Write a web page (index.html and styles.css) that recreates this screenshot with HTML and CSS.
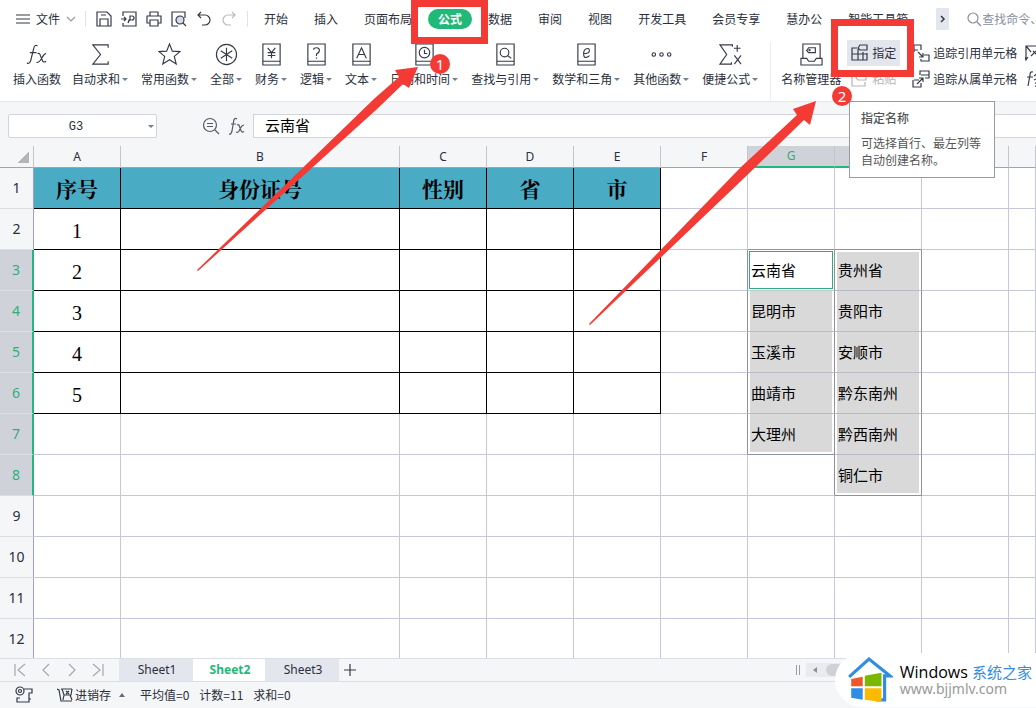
FILE: index.html
```html
<!DOCTYPE html>
<html lang="zh-CN">
<head>
<meta charset="utf-8">
<title>Sheet2</title>
<link rel="stylesheet" href="styles.css">
</head>
<body>
<div class="app">
  <nav class="menu">
    <button class="file"><svg class="burger" viewBox="0 0 14 10"><path d="M0 1h14M0 5h14M0 9h14"/></svg>文件<svg class="chev" viewBox="0 0 10 6"><path d="M1 1l4 4 4-4"/></svg></button>
    <div class="quick">
      <button aria-label="保存"><svg viewBox="0 0 16 16"><path d="M1 1h10l4 4v10H1zM4 15V8h8v7M5 4h5"/></svg></button>
      <button aria-label="输出"><svg viewBox="0 0 16 16"><path d="M2 5V1h13v14H2v-3M0 8h5M3 6l2 2-2 2M7 12l2-4V5h2a2 2 0 0 1 0 4H8l-1 3"/></svg></button>
      <button aria-label="打印"><svg viewBox="0 0 16 16"><path d="M4 5V1h8v4M4 12H1V5h14v7h-3M4 9h8v6H4z"/></svg></button>
      <button aria-label="预览"><svg viewBox="0 0 16 16"><path d="M7 15H1V1h13v6"/><circle cx="9" cy="9" r="4" fill="#d6dae6"/><path d="M12 12l3 3"/></svg></button>
      <button aria-label="撤销"><svg viewBox="0 0 16 16"><path d="M5 1L2 4l3 3M2 4h7a5 5 0 0 1 0 10H6"/></svg></button>
      <button aria-label="恢复" class="dim"><svg viewBox="0 0 16 16"><path d="M11 1l3 3-3 3M14 4H7a5 5 0 0 0 0 10h3"/></svg></button>
    </div>
    <div class="tabs">
      <button>开始</button><button>插入</button><button>页面布局</button><button class="on">公式</button><button>数据</button><button>审阅</button><button>视图</button><button>开发工具</button><button>会员专享</button><button>慧办公</button><button>智能工具箱</button>
    </div>
    <button class="more" aria-label="更多"><svg viewBox="0 0 6 10"><path d="M1 2l3 3-3 3"/></svg></button>
    <button class="find"><svg viewBox="0 0 16 16"><circle cx="7" cy="7" r="5"/><path d="M11 11l4 4"/></svg>查找命令、</button>
  </nav>

  <div class="ribbon">
    <div class="group">
      <button class="tool plain"><svg viewBox="0 0 24 24"><path d="M12 3q-3-2-4 3L5 18q-1 4-4 3M4 10h7M12 11q2-1 3 2l2 5q1 3 4 1M21 11q-2 0-4 4l-2 3q-2 3-4 2"/></svg><span>插入函数</span></button>
      <button class="tool"><svg viewBox="0 0 24 24"><path d="M20 5V2H4l8 10-8 10h16v-3"/></svg><span class="drop">自动求和</span></button>
      <button class="tool"><svg viewBox="0 0 24 24"><path d="M12 1l3 7.500 8 .5-6 5 2 8-7-4.500-7 4.500 2-8-6-5 8-.5z"/></svg><span class="drop">常用函数</span></button>
      <button class="tool"><svg viewBox="0 0 24 24"><circle cx="12" cy="12" r="10.500"/><path d="M12 5v14M6 8l12 8M18 8L6 16"/></svg><span class="drop">全部</span></button>
      <button class="tool"><svg viewBox="0 0 24 24"><path d="M3 1h18v22H3zM3 19h18M8 5l4 5 4-5M12 10v6M8 10h8M8 13h8"/></svg><span class="drop">财务</span></button>
      <button class="tool"><svg viewBox="0 0 24 24"><path d="M3 1h18v22H3zM3 19h18M9 7q0-2 3-2t3 2.500-3 4v2M12 15v1.500"/></svg><span class="drop">逻辑</span></button>
      <button class="tool"><svg viewBox="0 0 24 24"><path d="M3 1h18v22H3zM3 19h18M7 16l5-11 5 11M9 12h6"/></svg><span class="drop">文本</span></button>
      <button class="tool"><svg viewBox="0 0 24 24"><path d="M3 1h18v22H3zM3 19h18M12 7v4h3"/><circle cx="12" cy="10" r="5.500"/></svg><span class="drop">日期和时间</span></button>
      <button class="tool"><svg viewBox="0 0 24 24"><path d="M3 1h18v22H3zM3 19h18M14 13l4 3"/><circle cx="11" cy="10" r="4.500"/></svg><span class="drop">查找与引用</span></button>
      <button class="tool"><svg viewBox="0 0 24 24"><path d="M3 1h18v22H3zM3 19h18M9 11q6 0 6-3t-3-2-3 5q0 5 3 4t3-2"/></svg><span class="drop">数学和三角</span></button>
      <button class="tool"><svg viewBox="0 0 24 24"><circle cx="4" cy="12" r="1.800"/><circle cx="12" cy="12" r="1.800"/><circle cx="20" cy="12" r="1.800"/></svg><span class="drop">其他函数</span></button>
      <button class="tool"><svg viewBox="0 0 24 24"><path d="M14 4V2H1l7 10-7 10h12v-2M19 2v7M15.500 5.500h7M16 13l7 9M23 13l-7 9"/></svg><span class="drop">便捷公式</span></button>
    </div>
    <div class="group names">
      <button class="tool plain"><svg viewBox="0 0 24 24"><path d="M3 16V1h18v15M1 16h6l2 3h6l2-3h6v7H1zM7 8l2-3h7v5H9z"/><circle cx="10" cy="7.500" r=".6"/></svg><span>名称管理器</span></button>
      <div class="pair">
        <button class="hover"><svg viewBox="0 0 18 18"><path d="M7 4H2v12h15V9M2 10h15M8 5v11M13 8v8M8 4l2-3h7v5h-7z"/></svg>指定</button>
        <button class="off" disabled><svg viewBox="0 0 18 18"><path d="M6 3H2v13h13v-4M6 8l2-4h8v6H8z"/></svg>粘贴</button>
      </div>
    </div>
    <div class="group trace">
      <button><svg viewBox="0 0 18 18"><path d="M2 8V1h7v5M2 6h4M6 8l5 5M11 9v4H7M12 11h5v6H9v-2"/></svg>追踪引用单元格</button>
      <button><svg viewBox="0 0 18 18"><path d="M8 5V1h9v7h-4M9 5h8M5 14l6-6M7 8h4v4M2 10h5M1 10v7h8v-4"/></svg>追踪从属单元格</button>
    </div>
    <div class="group trace">
      <button aria-label="移去箭头"><svg viewBox="0 0 18 18"><path d="M1 15V2h13M1 2l5 6M6 12l8-8M8 7l7 7M3 13l-2 3-1-3"/></svg></button>
      <button aria-label="显示公式"><svg viewBox="0 0 18 18"><path d="M8 2Q5 1 5 5L3 16M2 7h6M9 6l5-4M9 10q4-2 4 1t-3 2q4 0 4 2t-4 1"/></svg></button>
    </div>
  </div>

  <div class="formula">
    <div class="namebox"><input type="text" aria-label="名称框" value="G3"><button aria-label="名称列表"></button></div>
    <div class="fx">
      <svg viewBox="0 0 18 18"><circle cx="8" cy="8" r="6.500"/><path d="M5 6.500h6M5 9.500h6M13 13l4 4"/></svg>
      <svg viewBox="0 0 18 18"><path d="M9 2Q6 0 5.500 5L4 14q-1 4-3 3M3 7h5M9 8q2-1 2.500 1.500l1.500 4q1 2.500 3 1M16 8q-2 0-3.500 3L11 14q-1 2-3 1"/></svg>
    </div>
    <input class="content" type="text" aria-label="编辑栏" value="云南省">
  </div>

  <div class="grid">
    <table>
      <colgroup><col class="c-row"><col class="c-std"><col class="c-wide"><col class="c-std"><col class="c-std"><col class="c-std"><col class="c-std"><col class="c-std"><col class="c-std"><col class="c-std"><col></colgroup>
      <thead><tr><th class="corner"></th><th>A</th><th>B</th><th>C</th><th>D</th><th>E</th><th>F</th><th class="pick">G</th><th class="pick"></th><th></th><th></th></tr></thead>
      <tbody>
        <tr class="title"><th>1</th><td class="t">序号</td><td class="t">身份证号</td><td class="t">性别</td><td class="t">省</td><td class="t">市</td><td></td><td></td><td></td><td></td><td></td></tr>
        <tr><th>2</th><td class="t">1</td><td class="t"></td><td class="t"></td><td class="t"></td><td class="t"></td><td></td><td class="above"></td><td class="above"></td><td></td><td></td></tr>
        <tr><th class="pick">3</th><td class="t">2</td><td class="t"></td><td class="t"></td><td class="t"></td><td class="t"></td><td class="edge"></td><td class="active"><span>云南省</span></td><td class="sel first">贵州省</td><td></td><td></td></tr>
        <tr><th class="pick">4</th><td class="t">3</td><td class="t"></td><td class="t"></td><td class="t"></td><td class="t"></td><td class="edge"></td><td class="sel">昆明市</td><td class="sel">贵阳市</td><td></td><td></td></tr>
        <tr><th class="pick">5</th><td class="t">4</td><td class="t"></td><td class="t"></td><td class="t"></td><td class="t"></td><td class="edge"></td><td class="sel">玉溪市</td><td class="sel">安顺市</td><td></td><td></td></tr>
        <tr><th class="pick">6</th><td class="t">5</td><td class="t"></td><td class="t"></td><td class="t"></td><td class="t"></td><td class="edge"></td><td class="sel">曲靖市</td><td class="sel">黔东南州</td><td></td><td></td></tr>
        <tr><th class="pick">7</th><td></td><td></td><td></td><td></td><td></td><td class="edge"></td><td class="sel last">大理州</td><td class="sel">黔西南州</td><td></td><td></td></tr>
        <tr><th class="pick">8</th><td></td><td></td><td></td><td></td><td></td><td></td><td class="edge"></td><td class="sel last">铜仁市</td><td></td><td></td></tr>
        <tr><th>9</th><td></td><td></td><td></td><td></td><td></td><td></td><td></td><td></td><td></td><td></td></tr>
        <tr><th>10</th><td></td><td></td><td></td><td></td><td></td><td></td><td></td><td></td><td></td><td></td></tr>
        <tr><th>11</th><td></td><td></td><td></td><td></td><td></td><td></td><td></td><td></td><td></td><td></td></tr>
        <tr><th>12</th><td></td><td></td><td></td><td></td><td></td><td></td><td></td><td></td><td></td><td></td></tr>
      </tbody>
    </table>
  </div>

  <div class="sheets">
    <div class="steps">
      <button aria-label="首个"><svg viewBox="0 0 12 14"><path d="M1 1v12M11 1L4 7l7 6"/></svg></button>
      <button aria-label="上一个"><svg viewBox="0 0 12 14"><path d="M9 1L3 7l6 6"/></svg></button>
      <button aria-label="下一个"><svg viewBox="0 0 12 14"><path d="M3 1l6 6-6 6"/></svg></button>
      <button aria-label="末个"><svg viewBox="0 0 12 14"><path d="M1 1l7 6-7 6M11 1v12"/></svg></button>
    </div>
    <button class="sheet">Sheet1</button><button class="sheet on">Sheet2</button><button class="sheet">Sheet3</button>
    <button class="add" aria-label="新建工作表"><svg viewBox="0 0 14 14"><path d="M7 1v12M1 7h12"/></svg></button>
    <div class="scroll"><i class="grip"></i><div class="track"><i class="left"></i><i class="thumb"></i></div></div>
  </div>

  <div class="status">
    <svg class="rec" viewBox="0 0 18 18"><circle cx="5" cy="5" r="4"/><circle cx="5" cy="5" r="1.500"/><path d="M9 3h8v4h-3v9H2v-4h3M14 13h2"/></svg>
    <button class="inv"><svg viewBox="0 0 16 16"><path d="M0 2l2 1 2 11h11M4 2h11M5 2l2 6h7l1-6M7 8l-1 5M13 8l2 5M9 4l3 3M12 4L9 7"/></svg>进销存<i class="up"></i></button>
    <span>平均值=0</span><span>计数=11</span><span>求和=0</span>
  </div>

  <div class="tip" role="tooltip"><strong>指定名称</strong><p>可选择首行、最左列等自动创建名称。</p></div>

  <div class="brand">
    <svg viewBox="0 0 44 46"><path d="M2 20L21 3l20 16h-5v23h-8" fill="none" stroke="#2f8de4" stroke-width="3"/><path d="M4 22l11-2v9H4z" fill="#f0562a"/><path d="M17 19l16-3v13H17z" fill="#7ab800"/><path d="M4 31h11v11L4 40z" fill="#2f8de4"/><path d="M17 31h16v13l-16-2z" fill="#fbb900"/></svg>
    <div><p class="name">Windows <b>系统之家</b></p><p class="site">www.bjjmlv.com</p></div>
  </div>

  <div class="marks">
    <svg viewBox="0 0 1036 708"><path d="M414.500 3.500h70v37h-70zM834.500 22.500h76v51h-76z" fill="none" stroke="#f33a35" stroke-width="7"/><path d="M197 270L375 98l24-21-4-7 23-3-9 21-6-4-27 26L198 271zM589 324L741 167l56-52-4-6 23-8-6 24-6-5-63 61L590 325z" fill="#f33a35"/></svg>
    <b class="dot one">1</b><b class="dot two">2</b>
  </div>
</div>
</body>
</html>
```
FILE: styles.css
```css
* { box-sizing: border-box; }
body { margin: 0; background: #fff; color: #2b2f3b; font: 12px/16px "Noto Sans CJK SC", sans-serif; }
button, input { font: inherit; color: inherit; border: 0; padding: 0; background: none; white-space: nowrap; }
p { margin: 0; }
svg { display: block; flex: none; fill: none; stroke: #353a49; stroke-width: 1.2; }
.app { position: relative; display: flex; flex-direction: column; height: 100vh; overflow: hidden; }

.menu { display: flex; align-items: center; flex: none; height: 38px; padding-left: 16px; overflow: hidden; }
.file { display: flex; align-items: center; gap: 6px; padding-right: 9px; border-right: 1px solid #e2e3e8; }
.burger { width: 14px; height: 10px; }
.chev { width: 10px; height: 6px; stroke: #999; }
.quick { display: flex; gap: 9px; padding: 0 10px; border-right: 1px solid #e2e3e8; }
.quick svg { width: 16px; height: 16px; }
.quick .dim svg { stroke: #bbb; }
.tabs { display: flex; flex: none; gap: 26px; margin-left: 16px; }
.tabs .on { margin: -2px -10px; padding: 2px 10px; border-radius: 10px; background: #21b978; color: #fff; font-weight: bold; }
.more { display: flex; align-items: center; justify-content: center; flex: none; width: 13px; height: 22px; margin-left: 28px; background: #e4e6ed; }
.more svg { width: 6px; height: 10px; stroke-width: 1.5; }
.find { display: flex; align-items: center; flex: none; margin-left: 17px; color: #8a8f9c; }
.find svg { width: 16px; height: 16px; stroke: #8a8f9c; }

.ribbon { display: flex; flex: none; height: 64px; padding: 4px 0 0 13px; overflow: hidden; border-bottom: 1px solid #e6e7ea; }
.group { display: flex; flex: none; gap: 13px; align-items: flex-start; }
.tool { display: flex; flex-direction: column; align-items: center; gap: 5px; }
.tool svg { width: 23px; height: 23px; margin-top: 1px; }
.tool.plain { margin-right: -2px; }
.drop { display: flex; align-items: center; gap: 2px; }
.drop::after, .namebox button::after { content: ""; border: 3px solid transparent; border-top-color: #777d8a; border-bottom: 0; }
.names { margin-left: 12px; padding-left: 10px; border-left: 1px solid #eee; gap: 8px; }
.pair, .trace { display: flex; flex-direction: column; margin-top: -2px; }
.pair button { display: flex; align-items: center; gap: 4px; height: 26px; padding: 0 4px 0 3px; }
.pair svg, .trace svg { width: 18px; height: 18px; }
.pair .hover { background: #e4e6ed; }
.pair .off { color: #b5b5b5; }
.off svg { stroke: #b5b5b5; }
.trace { gap: 0; margin-left: 12px; }
.trace button { display: flex; align-items: center; gap: 3px; height: 26px; }
.trace + .trace { margin-left: 8px; }

.formula { display: flex; align-items: center; flex: none; height: 44px; padding: 4px 0 0 8px; background: #f5f6f8; }
.namebox { display: flex; align-items: center; width: 149px; height: 24px; padding-right: 2px; border: 1px solid #d2d4d9; border-radius: 2px; background: #fff; }
.namebox input { flex: 1; min-width: 0; padding: 2px 5px 0 0; text-align: center; font-family: "Liberation Mono", monospace; }
.namebox button { display: flex; }
.fx { display: flex; gap: 8px; padding: 0 7px 0 45px; }
.fx svg { width: 18px; height: 18px; stroke: #555a66; }
.content { flex: 1; min-width: 0; height: 24px; padding: 0 11px 3px; border: 1px solid #d2d4d9; border-right: 0; background: #fff; color: #000; font-size: 15px; }

.grid { flex: 1; min-height: 0; overflow: hidden; }
table { width: 100%; table-layout: fixed; border-collapse: separate; border-spacing: 0; }
.c-row { width: 34px; }
.c-std { width: 87px; }
.c-wide { width: 279px; }
th { padding: 0; background: #f5f6f8; font: 14px/20px "Noto Sans", sans-serif; }
thead th { height: 22px; font-size: 12px; border-bottom: 1px solid #9ea1b8; border-right: 1px solid #c3c5cf; }
thead .pick { border-bottom: 2px solid #21b978; background: #d0d2da; color: #2fae7c; }
.corner { background: linear-gradient(135deg, transparent 50%, #b5b5b5 50%) 18px 6px / 11px 11px no-repeat #f5f6f8; }
tbody th { border-right: 1px solid #9ea1b8; border-bottom: 1px solid #dcdee5; }
tbody .pick { border-right: 2px solid #21b978; background: #d0d2da; color: #2fae7c; }
td { height: 41px; padding: 0 3px; border-right: 1px solid #c6c8d8; border-bottom: 1px solid #c6c8d8; color: #000; font-size: 15px; white-space: nowrap; }
.t { border-color: #000; padding: 4px 0 0; text-align: center; font: 20px/20px "Liberation Serif", serif; }
.title .t { padding: 0; background: #4aabc5; font: bold 21px/24px "Noto Serif CJK SC", "Noto Sans CJK SC", serif; }
.sel { background: #d9d9d9; box-shadow: inset 2px 0 #fff, inset -2px 0 #fff; border-right-color: #8e92a0; border-bottom-color: #b9bbc6; }
.first { box-shadow: inset 2px 0 #fff, inset -2px 0 #fff, inset 0 2px #fff; }
.last { box-shadow: inset 2px 0 #fff, inset -2px 0 #fff, inset 0 -2px #fff; border-bottom-color: #8e92a0; }
.edge { border-right-color: #8e92a0; }
.above { border-bottom-color: #8e92a0; }
.active { padding: 1px; border-right-color: #8e92a0; }
.active span { display: flex; align-items: center; height: 38px; padding-left: 1px; border: 1px solid #2fae7c; }

.sheets { display: flex; align-items: stretch; flex: none; height: 24px; background: #f5f6f8; border-top: 1px solid #dcdee5; border-bottom: 1px solid #dcdee5; }
.steps { display: flex; align-items: center; gap: 14px; width: 119px; padding-left: 14px; }
.steps svg { width: 12px; height: 14px; stroke: #a5a8b0; }
.sheet { width: 74px; padding-left: 2px; background: #e4e6ed; font-family: "Noto Sans", sans-serif; }
.sheet.on { width: 72px; background: #fff; color: #21b978; font-weight: bold; }
.add { display: flex; align-items: center; padding-left: 4px; }
.add svg { width: 14px; height: 14px; }
.scroll { display: flex; align-items: center; flex: 1; max-width: 240px; margin-left: auto; gap: 6px; }
.grip { width: 4px; height: 10px; border: 1px solid #999cab; border-width: 0 1px; }
.track { display: flex; align-items: center; flex: 1; gap: 9px; height: 14px; padding-left: 7px; background: #eaebef; }
.left { border: 3px solid transparent; border-right: 4px solid #8b8ea0; border-left: 0; }
.thumb { flex: 1; height: 12px; border-radius: 6px; background: #d0d1d6; }

.status { display: flex; align-items: center; flex: none; gap: 10px; height: 26px; padding-left: 15px; background: #f5f6f8; }
.rec { width: 18px; height: 18px; }
.inv { display: flex; align-items: center; gap: 2px; margin: 0 5px 0 14px; }
.inv svg { width: 16px; height: 16px; }
.up { margin-left: 6px; border: 3px solid transparent; border-bottom: 4px solid #666b78; border-top: 0; }

.tip { position: absolute; left: 849px; top: 101px; width: 146px; padding: 7px 11px 9px; border: 1px solid #9a9a9a; background: #fff; color: #555; line-height: 17px; }
.tip strong { display: block; margin-bottom: 8px; font-weight: 500; }

.brand { position: absolute; right: 0; bottom: 1px; display: flex; align-items: center; gap: 7px; height: 54px; padding: 0 4px 0 12px; border-radius: 27px 0 0 27px; background: #fff; }
.brand svg { width: 46px; height: 48px; stroke: none; }
.name { color: #000; font: 16px/18px "Open Sans", "Noto Sans CJK SC", sans-serif; white-space: nowrap; }
.name b { color: #2f8de4; font-weight: normal; font-size: 15px; }
.site { color: #999; font: 13px/16px "Noto Sans", sans-serif; font-size: 14px; }

.marks { position: absolute; left: 0; top: 0; pointer-events: none; }
.marks svg { width: 1036px; height: 708px; stroke: none; }
.dot { position: absolute; width: 20px; height: 20px; border-radius: 50%; background: #f33a35; color: #fff; font: 15px/20px "Noto Sans", sans-serif; text-align: center; }
.one { left: 430px; top: 54px; }
.two { left: 832px; top: 86px; }
```
